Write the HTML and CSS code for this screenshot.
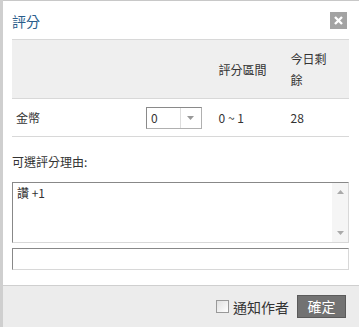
FILE: index.html
```html
<!DOCTYPE html>
<html>
<head>
<meta charset="utf-8">
<link rel="stylesheet" href="styles.css">
</head>
<body>
<div class="dialog">
  <div class="head">
    <span class="title">評分</span>
    <span class="close"><svg width="9" height="9" viewBox="0 0 9 9"><path d="M1 1L8 8M8 1L1 8" stroke="#fff" stroke-width="2.4"/></svg></span>
  </div>
  <div class="body">
    <table class="rate">
      <tr class="th">
        <td class="c1"></td>
        <td class="c2"></td>
        <td class="c3">評分區間</td>
        <td class="c4">今日剩餘</td>
      </tr>
      <tr class="row">
        <td class="c1 name">金幣</td>
        <td class="c2">
          <div class="select"><span class="val">0</span><span class="arrow"><svg width="7" height="4" viewBox="0 0 7 4"><path d="M0 0H7L3.5 4Z" fill="#999"/></svg></span></div>
        </td>
        <td class="c3">0 ~ 1</td>
        <td class="c4">28</td>
      </tr>
    </table>
    <div class="label">可選評分理由:</div>
    <div class="area">
      <div class="area-text">讚 +1</div>
      <div class="scroll">
        <svg width="7" height="4" viewBox="0 0 7 4"><path d="M0 4H7L3.5 0Z" fill="#aaa"/></svg>
        <svg width="7" height="4" viewBox="0 0 7 4"><path d="M0 0H7L3.5 4Z" fill="#aaa"/></svg>
      </div>
    </div>
    <div class="input"></div>
  </div>
  <div class="foot">
    <span class="check"></span>
    <span class="notify">通知作者</span>
    <span class="btn">確定</span>
  </div>
</div>
</body>
</html>
```
FILE: styles.css
```css
html, body { margin: 0; padding: 0; }
body {
  background: #cfcfcf;
  font-family: "Noto Sans CJK TC", "Liberation Sans", sans-serif;
  font-size: 12px;
  color: #333;
  width: 359px;
  height: 327px;
  overflow: hidden;
}
.dialog {
  margin-left: 3px;
  height: 326px;
  background: #fff;
  border-top: 1px solid #c8c8c8;
  display: flex;
  flex-direction: column;
}
.head {
  height: 38px;
  display: flex;
  align-items: flex-start;
  justify-content: space-between;
  padding: 0 12px 0 9px;
}
.title {
  margin-top: 10px;
  font-size: 14px;
  line-height: 20px;
  color: #2a5d8c;
}
.close {
  margin-top: 11px;
  width: 17px;
  height: 17px;
  background: #a3a3a3;
  display: flex;
  align-items: center;
  justify-content: center;
}
.body {
  padding: 0 10px 0 9px;
  flex: 1;
}
.rate {
  width: 337px;
  border-collapse: collapse;
}
.rate td {
  padding: 0;
  vertical-align: middle;
}
.th td {
  background: #efefef;
  height: 58px;
  border-top: 1px solid #d8d8d8;
  border-bottom: 1px solid #d8d8d8;
  line-height: 21px;
}
.row td {
  height: 37px;
  border-bottom: 1px solid #d8d8d8;
}
.c1 { width: 132px; }
.name { padding-left: 4px !important; }
.c2 { width: 73px; }
.c3 { width: 73px; padding-left: 0; }
.c4 { width: 46px; padding-right: 13px !important; }
.select {
  width: 54px;
  height: 20px;
  border: 1px solid #b0b0b0;
  border-top-color: #8a8a8a;
  border-left-color: #8a8a8a;
  display: flex;
  background: #fff;
}
.val {
  flex: 1;
  padding-left: 4px;
  line-height: 20px;
  border-right: 1px solid #ddd;
}
.arrow {
  width: 20px;
  display: flex;
  align-items: center;
  justify-content: center;
}
.label {
  margin-top: 15px;
  line-height: 20px;
  font-size: 12px;
}
.area {
  margin-top: 10px;
  height: 59px;
  border: 1px solid #d8d8d8;
  border-top-color: #888;
  border-left-color: #888;
  display: flex;
}
.area-text {
  flex: 1;
  padding: 1px 0 0 4px;
  line-height: 18px;
}
.scroll {
  width: 16px;
  background: #f5f5f5;
  display: flex;
  flex-direction: column;
  justify-content: space-between;
  align-items: center;
  padding: 7px 0 7px;
}
.input {
  margin-top: 5px;
  height: 20px;
  border: 1px solid #d8d8d8;
  border-top-color: #888;
  border-left-color: #888;
}
.foot {
  height: 41px;
  background: #ececec;
  border-top: 1px solid #cfcfcf;
  display: flex;
  align-items: center;
  justify-content: flex-end;
  padding-right: 13px;
}
.check {
  width: 11px;
  height: 11px;
  border: 1px solid #999;
  background: linear-gradient(135deg, #e0e0e0, #fff);
  margin-right: 4px;
}
.notify {
  font-size: 14px;
  color: #333;
  margin-right: 8px;
}
.btn {
  width: 47px;
  height: 21px;
  background: #727272;
  border: 1px solid #5a5a5a;
  color: #fff;
  font-size: 14px;
  line-height: 21px;
  text-align: center;
}
```
